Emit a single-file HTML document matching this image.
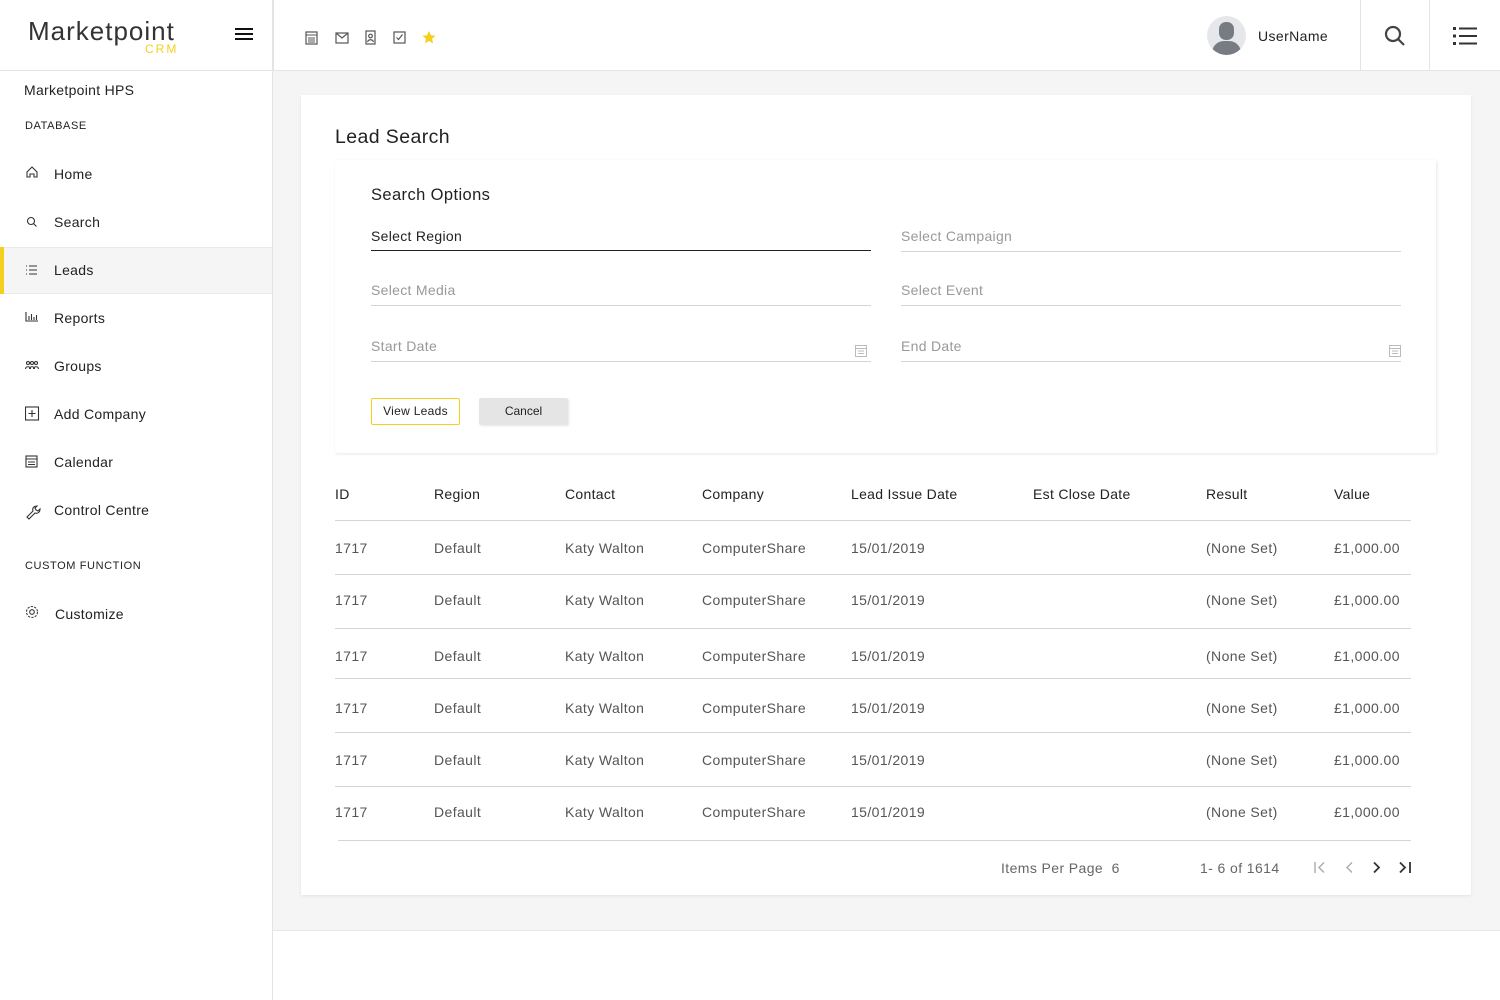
<!DOCTYPE html>
<html><head><meta charset="utf-8"><style>
*{box-sizing:border-box;margin:0;padding:0}
body{width:1500px;height:1000px;position:relative;background:#fff;font-family:"Liberation Sans",sans-serif;color:#222;overflow:hidden}
.a{position:absolute;white-space:nowrap}
.side{position:absolute;left:0;top:0;width:273px;height:1000px;border-right:1px solid #e4e4e4;background:#fff}
.main{position:absolute;left:273px;top:71px;width:1227px;height:860px;background:#f5f5f5;border-bottom:1px solid #e8e8e8}
.top{position:absolute;left:0;top:0;width:1500px;height:71px;border-bottom:1px solid #e4e4e4;background:#fff}
.nav{font-size:14px;color:#222;letter-spacing:.3px}
.ph{font-size:14px;color:#999;letter-spacing:.3px}
.ln{position:absolute;height:1px;background:#d5d5d5}
.td{font-size:14px;color:#555;letter-spacing:.4px}
.th{font-size:14px;color:#222;letter-spacing:.3px}
</style></head><body>
<div class="main"></div>
<div class="top"></div>
<div class="side"></div>
<div class="a" style="left:0;top:70px;width:273px;height:1px;background:#e4e4e4"></div>
<div class="a" style="left:28px;top:16px;font-size:26px;color:#333;letter-spacing:1px">Marketpoint</div>
<div class="a" style="left:145px;top:42px;font-size:12px;color:#f5cf1d;letter-spacing:2px">CRM</div>
<div class="a" style="left:235px;top:28px;width:18px;height:2px;background:#111;box-shadow:0 5px 0 #111,0 10px 0 #111"></div>
<div class="a" style="left:273px;top:0;width:1px;height:71px;background:#e4e4e4"></div>
<svg class="a" style="left:305px;top:30px" width="140" height="16" viewBox="0 0 140 16" fill="none" stroke="#555" stroke-width="1.2">
<rect x="1" y="2" width="11" height="12"/><path d="M1 5h11M3 8h7M3 10h7M3 12h7" stroke-width="1"/>
<rect x="31" y="3" width="12" height="10"/><path d="M31 3l6 5 6-5"/>
<rect x="61" y="1" width="9" height="13"/><circle cx="65.5" cy="6" r="1.8"/><path d="M62.5 12c1-3 5-3 6 0"/>
<rect x="89" y="2" width="11" height="11"/><path d="M91.5 7.5l2 2 4-5"/>
<path d="M124 1l2 4.3 4.6.5-3.5 3 1 4.6-4.1-2.4-4.1 2.4 1-4.6-3.5-3 4.6-.5z" fill="#f5cf1d" stroke="none"/>
</svg>
<div class="a" style="left:1207px;top:16px;width:39px;height:39px;border-radius:50%;background:#e6e7ea;overflow:hidden"><div style="position:absolute;left:12px;top:6px;width:15px;height:18px;border-radius:7px;background:#777b82"></div><div style="position:absolute;left:5px;top:25px;width:29px;height:20px;border-radius:12px 12px 0 0;background:#777b82"></div></div>
<div class="a" style="left:1258px;top:28px;font-size:14px;color:#222;letter-spacing:.4px">UserName</div>
<div class="a" style="left:1360px;top:0;width:70px;height:70px;border-left:1px solid #e4e4e4;border-right:1px solid #e4e4e4"></div>
<svg class="a" style="left:1384px;top:25px" width="22" height="22" fill="none" stroke="#444" stroke-width="2.2"><circle cx="9" cy="9" r="7"/><path d="M14 14l6 6"/></svg>
<svg class="a" style="left:1453px;top:26px" width="24" height="20" fill="#333"><rect x="0" y="1" width="3" height="3"/><rect x="6" y="1.5" width="18" height="2"/><rect x="0" y="8.5" width="3" height="3"/><rect x="6" y="9" width="18" height="2"/><rect x="0" y="16" width="3" height="3"/><rect x="6" y="16.5" width="18" height="2"/></svg>

<div class="a nav" style="left:24px;top:82px">Marketpoint HPS</div>
<div class="a" style="left:25px;top:120px;font-size:11px;letter-spacing:.6px;color:#222">DATABASE</div>
<div class="a" style="left:0;top:247px;width:272px;height:47px;background:#f5f5f5;border-top:1px solid #ebebeb;border-bottom:1px solid #ebebeb"></div>
<div class="a" style="left:0;top:247px;width:4px;height:47px;background:#f5cf1d"></div>
<svg class="a" style="left:25px;top:165px" width="16" height="470" fill="none" stroke="#333" stroke-width="1.1">
<path d="M2 7l5-5 5 5v5H9V9H5v3H2z"/>
<circle cx="6" cy="56" r="3.5"/><path d="M8.5 58.5l3 3"/>
<path d="M1 101h1M1 105h1M1 109h1M4 101h8M4 105h8M4 109h8"/>
<path d="M1 147v9h12M4 155v-4M6.5 155v-6M9 155v-3M11.5 155v-5"/>
<circle cx="3" cy="198" r="1.5"/><circle cx="7" cy="198" r="1.5"/><circle cx="11" cy="198" r="1.5"/><path d="M0.5 204c0-3 5-3 5 0M4.5 204c0-3 5-3 5 0M8.5 204c0-3 5-3 5 0"/>
<rect x="0.5" y="242" width="13" height="13"/><path d="M7 245v7M3.5 248.5h7"/>
<rect x="1" y="291" width="11" height="11"/><path d="M1 294h11M3 297h7M3 299.5h7"/>
<path d="M2 352l6-6c-1-3 1-5 4-5l-2 2 1 2 2 1 2-2c0 3-2 5-5 4l-6 6z"/>
<circle cx="7" cy="447" r="2.3"/><circle cx="7" cy="447" r="5.5" stroke-dasharray="2.2 1.3"/>
</svg>
<div class="a nav" style="left:54px;top:166px">Home</div>
<div class="a nav" style="left:54px;top:214px">Search</div>
<div class="a nav" style="left:54px;top:262px">Leads</div>
<div class="a nav" style="left:54px;top:310px">Reports</div>
<div class="a nav" style="left:54px;top:358px">Groups</div>
<div class="a nav" style="left:54px;top:406px">Add Company</div>
<div class="a nav" style="left:54px;top:454px">Calendar</div>
<div class="a nav" style="left:54px;top:502px">Control Centre</div>
<div class="a" style="left:25px;top:560px;font-size:11px;letter-spacing:.6px;color:#222">CUSTOM FUNCTION</div>
<div class="a nav" style="left:55px;top:606px">Customize</div>

<div class="a" style="left:301px;top:95px;width:1170px;height:800px;background:#fff;box-shadow:0 1px 3px rgba(0,0,0,.08)"></div>
<div class="a" style="left:335px;top:126px;font-size:19.5px;color:#222;letter-spacing:.4px">Lead Search</div>
<div class="a" style="left:335px;top:160px;width:1101px;height:293px;background:#fff;box-shadow:1px 1px 3px rgba(0,0,0,.1)"></div>
<div class="a" style="left:371px;top:186px;font-size:16.5px;color:#222;letter-spacing:.4px">Search Options</div>
<div class="a nav" style="left:371px;top:228px">Select Region</div>
<div class="a" style="left:371px;top:250px;width:500px;height:1px;background:#222"></div>
<div class="a ph" style="left:901px;top:228px">Select Campaign</div>
<div class="ln" style="left:901px;top:251px;width:500px"></div>
<div class="a ph" style="left:371px;top:282px">Select Media</div>
<div class="ln" style="left:371px;top:305px;width:500px"></div>
<div class="a ph" style="left:901px;top:282px">Select Event</div>
<div class="ln" style="left:901px;top:305px;width:500px"></div>
<div class="a ph" style="left:371px;top:338px">Start Date</div>
<div class="ln" style="left:371px;top:361px;width:500px"></div>
<div class="a ph" style="left:901px;top:338px">End Date</div>
<div class="ln" style="left:901px;top:361px;width:500px"></div>
<svg class="a" style="left:855px;top:344px" width="12" height="13" fill="none" stroke="#bbb"><rect x=".5" y="1.5" width="11" height="11"/><path d="M.5 4.5h11M3 7h6M3 9.5h6"/></svg>
<svg class="a" style="left:1389px;top:344px" width="12" height="13" fill="none" stroke="#bbb"><rect x=".5" y="1.5" width="11" height="11"/><path d="M.5 4.5h11M3 7h6M3 9.5h6"/></svg>
<div class="a" style="left:371px;top:398px;width:89px;height:27px;border:1px solid #f5cf1d;border-radius:2px;font-size:12px;text-align:center;line-height:25px;letter-spacing:.3px">View Leads</div>
<div class="a" style="left:479px;top:398px;width:89px;height:27px;background:#e5e5e5;border-radius:2px;font-size:12px;text-align:center;line-height:27px;box-shadow:1px 1px 2px rgba(0,0,0,.1)">Cancel</div>

<div class="a th" style="left:335px;top:486px">ID</div>
<div class="a th" style="left:434px;top:486px">Region</div>
<div class="a th" style="left:565px;top:486px">Contact</div>
<div class="a th" style="left:702px;top:486px">Company</div>
<div class="a th" style="left:851px;top:486px">Lead Issue Date</div>
<div class="a th" style="left:1033px;top:486px">Est Close Date</div>
<div class="a th" style="left:1206px;top:486px">Result</div>
<div class="a th" style="left:1334px;top:486px">Value</div>
<div class="ln" style="left:335px;top:520px;width:1076px"></div>
<div class="ln" style="left:335px;top:574px;width:1076px"></div>
<div class="ln" style="left:335px;top:628px;width:1076px"></div>
<div class="ln" style="left:335px;top:678px;width:1076px"></div>
<div class="ln" style="left:335px;top:732px;width:1076px"></div>
<div class="ln" style="left:335px;top:786px;width:1076px"></div>
<div class="ln" style="left:338px;top:840px;width:1073px"></div>

<div class="a td" style="left:335px;top:540px">1717</div><div class="a td" style="left:434px;top:540px">Default</div><div class="a td" style="left:565px;top:540px">Katy Walton</div><div class="a td" style="left:702px;top:540px">ComputerShare</div><div class="a td" style="left:851px;top:540px">15/01/2019</div><div class="a td" style="left:1206px;top:540px">(None Set)</div><div class="a td" style="left:1334px;top:540px">£1,000.00</div>
<div class="a td" style="left:335px;top:592px">1717</div><div class="a td" style="left:434px;top:592px">Default</div><div class="a td" style="left:565px;top:592px">Katy Walton</div><div class="a td" style="left:702px;top:592px">ComputerShare</div><div class="a td" style="left:851px;top:592px">15/01/2019</div><div class="a td" style="left:1206px;top:592px">(None Set)</div><div class="a td" style="left:1334px;top:592px">£1,000.00</div>
<div class="a td" style="left:335px;top:648px">1717</div><div class="a td" style="left:434px;top:648px">Default</div><div class="a td" style="left:565px;top:648px">Katy Walton</div><div class="a td" style="left:702px;top:648px">ComputerShare</div><div class="a td" style="left:851px;top:648px">15/01/2019</div><div class="a td" style="left:1206px;top:648px">(None Set)</div><div class="a td" style="left:1334px;top:648px">£1,000.00</div>
<div class="a td" style="left:335px;top:700px">1717</div><div class="a td" style="left:434px;top:700px">Default</div><div class="a td" style="left:565px;top:700px">Katy Walton</div><div class="a td" style="left:702px;top:700px">ComputerShare</div><div class="a td" style="left:851px;top:700px">15/01/2019</div><div class="a td" style="left:1206px;top:700px">(None Set)</div><div class="a td" style="left:1334px;top:700px">£1,000.00</div>
<div class="a td" style="left:335px;top:752px">1717</div><div class="a td" style="left:434px;top:752px">Default</div><div class="a td" style="left:565px;top:752px">Katy Walton</div><div class="a td" style="left:702px;top:752px">ComputerShare</div><div class="a td" style="left:851px;top:752px">15/01/2019</div><div class="a td" style="left:1206px;top:752px">(None Set)</div><div class="a td" style="left:1334px;top:752px">£1,000.00</div>
<div class="a td" style="left:335px;top:804px">1717</div><div class="a td" style="left:434px;top:804px">Default</div><div class="a td" style="left:565px;top:804px">Katy Walton</div><div class="a td" style="left:702px;top:804px">ComputerShare</div><div class="a td" style="left:851px;top:804px">15/01/2019</div><div class="a td" style="left:1206px;top:804px">(None Set)</div><div class="a td" style="left:1334px;top:804px">£1,000.00</div>

<div class="a td" style="left:1001px;top:860px;color:#666">Items Per Page&nbsp; 6</div>
<div class="a td" style="left:1200px;top:860px;color:#666">1- 6 of 1614</div>
<svg class="a" style="left:1313px;top:861px" width="100" height="14" fill="none" stroke-width="1.4">
<path d="M2 1v11M11 1.5l-5 5 5 5" stroke="#aaa"/>
<path d="M39 1.5l-5 5 5 5" stroke="#aaa"/>
<path d="M61 1.5l5 5-5 5" stroke="#333" stroke-width="1.8"/>
<path d="M87 1.5l5 5-5 5M97 1v11" stroke="#333" stroke-width="1.8"/>
</svg>
</body></html>
